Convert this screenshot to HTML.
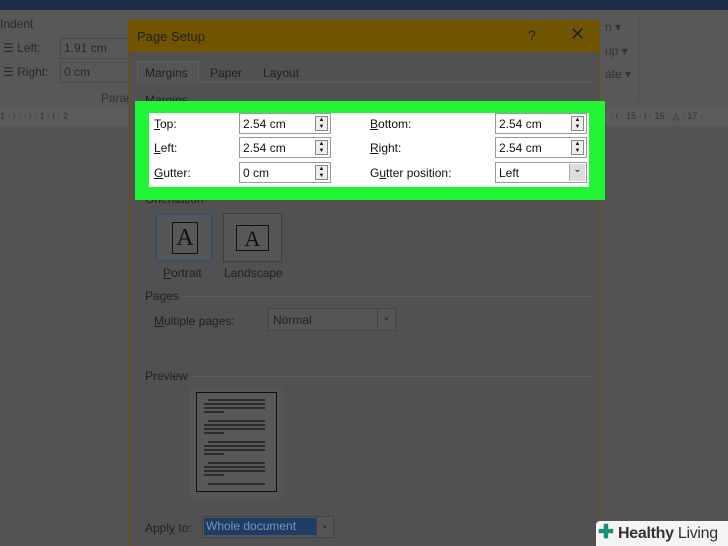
<!DOCTYPE html>
<html><head><style>
*{margin:0;padding:0;box-sizing:border-box}
body{width:728px;height:546px;overflow:hidden;background:#535353;font-family:"Liberation Sans",sans-serif;position:relative;color:#222}
.a{position:absolute}
.t{font-size:12px;white-space:nowrap}
.inp{position:absolute;background:#fff;border:1px solid #999;height:21px;font-size:12px;padding:3px 0 0 3px;color:#111;white-space:nowrap}
.spin{position:absolute;right:2px;top:2px;width:13px;height:15px;border:1px solid #888;background:#eee;font-size:6px;line-height:7px;text-align:center}
.lbl{position:absolute;font-size:12px;color:#111;white-space:nowrap}
.dl{position:absolute;height:1px;background:#5f5f5f}
</style></head><body>
<div class="a" style="left:0;top:0;width:728px;height:10px;background:#1c2b47"></div>
<div class="a" style="left:0;top:10px;width:728px;height:98px;background:#585858"></div>
<div class="a t" style="left:0;top:17px;color:#2a2a2a">Indent</div>
<div class="a t" style="left:3px;top:41px;color:#2a2a2a">☰ Left:</div>
<div class="a" style="left:60px;top:38px;width:70px;height:21px;border:1px solid #4a4a4a"></div>
<div class="a t" style="left:64px;top:41px;color:#2a2a2a">1.91 cm</div>
<div class="a t" style="left:3px;top:65px;color:#2a2a2a">☰ Right:</div>
<div class="a" style="left:60px;top:62px;width:70px;height:21px;border:1px solid #4a4a4a"></div>
<div class="a t" style="left:64px;top:65px;color:#2a2a2a">0 cm</div>
<div class="a t" style="left:101px;top:91px;color:#333">Parag</div>
<div class="a" style="left:0;top:108px;width:728px;height:18px;background:#5b5b5b"></div>
<div class="a" style="left:0;top:111px;font-size:9px;color:#333;white-space:nowrap">1 · ı ·  · ı · 1 · ı · 2</div>
<div class="a" style="left:610px;top:111px;font-size:9px;color:#333;white-space:nowrap">· ı · 15 · ı · 16 · △ · 17 ·</div>
<div class="a" style="left:638px;top:14px;width:1px;height:88px;background:#4d4d4d"></div>
<div class="a t" style="left:605px;top:20px;color:#333">n ▾</div>
<div class="a t" style="left:605px;top:44px;color:#333">up ▾</div>
<div class="a t" style="left:605px;top:67px;color:#333">ate ▾</div>
<!-- dialog -->
<div class="a" style="left:128px;top:20px;width:472px;height:526px;background:#515151;border-left:1px solid #6b5000;border-right:1px solid #6b5000"></div>
<div class="a" style="left:128px;top:20px;width:472px;height:32px;background:#715400"></div>
<div class="a t" style="left:137px;top:29px;font-size:13px;color:#222">Page Setup</div>
<div class="a" style="left:528px;top:27px;font-size:14px;color:#222">?</div>
<div class="a" style="left:570px;top:24px;font-size:18px;color:#222">✕</div>
<div class="a" style="left:136px;top:82px;width:456px;height:1px;background:#5f5f5f"></div>
<div class="a" style="left:137px;top:61px;width:62px;height:22px;background:#555;border:1px solid #5f5f5f;border-bottom:none"></div>
<div class="a t" style="left:145px;top:66px">Margins</div>
<div class="a t" style="left:210px;top:66px">Paper</div>
<div class="a t" style="left:263px;top:66px">Layout</div>
<div class="a t" style="left:145px;top:93px">Margins</div>
<div class="a t" style="left:145px;top:192px">Orientation</div>
<!-- green highlight -->
<div class="a" style="left:135px;top:101px;width:470px;height:99px;background:#20f536"></div>
<div class="a" style="left:149px;top:113px;width:440px;height:74px;background:#fff"></div>
<div class="lbl" style="left:154px;top:117px"><u>T</u>op:</div>
<div class="lbl" style="left:154px;top:141px"><u>L</u>eft:</div>
<div class="lbl" style="left:154px;top:166px"><u>G</u>utter:</div>
<div class="inp" style="left:239px;top:113px;width:92px">2.54 cm<div class="spin">▲<br>▼</div></div>
<div class="inp" style="left:239px;top:137px;width:92px">2.54 cm<div class="spin">▲<br>▼</div></div>
<div class="inp" style="left:239px;top:162px;width:92px">0 cm<div class="spin">▲<br>▼</div></div>
<div class="lbl" style="left:370px;top:117px"><u>B</u>ottom:</div>
<div class="lbl" style="left:370px;top:141px"><u>R</u>ight:</div>
<div class="lbl" style="left:370px;top:166px">G<u>u</u>tter position:</div>
<div class="inp" style="left:495px;top:113px;width:92px">2.54 cm<div class="spin">▲<br>▼</div></div>
<div class="inp" style="left:495px;top:137px;width:92px">2.54 cm<div class="spin">▲<br>▼</div></div>
<div class="inp" style="left:495px;top:162px;width:92px">Left<div class="a" style="right:1px;top:1px;width:16px;height:17px;background:#ddd;border-left:1px solid #aaa;font-size:10px;text-align:center">⌄</div></div>
<!-- orientation -->
<div class="a" style="left:155px;top:213px;width:58px;height:49px;border:2px solid #3a4f6a;background:#565656"></div>
<div class="a" style="left:223px;top:213px;width:59px;height:49px;border:1px solid #3e3e3e;background:#565656"></div>
<div class="a" style="left:172px;top:222px;width:26px;height:32px;border:1px solid #111;background:#585858;font-family:'Liberation Serif',serif;font-size:24px;text-align:center;line-height:30px;color:#111">A</div>
<div class="a" style="left:236px;top:225px;width:33px;height:26px;border:1px solid #111;background:#585858;font-family:'Liberation Serif',serif;font-size:22px;text-align:center;line-height:26px;color:#111">A</div>
<div class="a t" style="left:163px;top:266px"><u>P</u>ortrait</div>
<div class="a t" style="left:224px;top:266px">Landscape</div>
<div class="a t" style="left:145px;top:289px">Pages</div>
<div class="dl" style="left:182px;top:296px;width:409px"></div>
<div class="a t" style="left:154px;top:314px"><u>M</u>ultiple pages:</div>
<div class="a" style="left:268px;top:308px;width:128px;height:23px;border:1px solid #444;background:#555"></div>
<div class="a t" style="left:273px;top:313px">Normal</div>
<div class="a" style="left:377px;top:309px;width:18px;height:21px;border-left:1px solid #444;font-size:10px;text-align:center;line-height:18px">⌄</div>
<div class="a t" style="left:145px;top:369px">Preview</div>
<div class="dl" style="left:192px;top:376px;width:399px"></div>
<div class="a" style="left:190px;top:387px;width:93px;height:112px;background:#555"></div>
<div class="a" style="left:196px;top:392px;width:81px;height:100px;border:1px solid #111;background:#585858"></div>
<svg class="a" style="left:196px;top:392px" width="81" height="100"><g stroke="#111" stroke-width="1.3">
<line x1="12" y1="8" x2="69" y2="8"/><line x1="8" y1="12" x2="69" y2="12"/><line x1="8" y1="16" x2="69" y2="16"/><line x1="8" y1="20" x2="28" y2="20"/>
<line x1="12" y1="29" x2="69" y2="29"/><line x1="8" y1="33" x2="69" y2="33"/><line x1="8" y1="37" x2="69" y2="37"/><line x1="8" y1="41" x2="28" y2="41"/>
<line x1="12" y1="50" x2="69" y2="50"/><line x1="8" y1="54" x2="69" y2="54"/><line x1="8" y1="58" x2="69" y2="58"/><line x1="8" y1="62" x2="28" y2="62"/>
<line x1="12" y1="71" x2="69" y2="71"/><line x1="8" y1="75" x2="69" y2="75"/><line x1="8" y1="79" x2="69" y2="79"/><line x1="8" y1="83" x2="28" y2="83"/>
<line x1="12" y1="92" x2="69" y2="92"/></g></svg>
<div class="a t" style="left:145px;top:521px">Appl<u>y</u> to:</div>
<div class="a" style="left:202px;top:516px;width:132px;height:22px;border:1px solid #444;background:#555"></div>
<div class="a" style="left:204px;top:518px;width:112px;height:17px;background:#1e3d66;color:#7f93b0;font-size:12px;padding:1px 2px;white-space:nowrap">Whole document</div>
<div class="a" style="left:316px;top:517px;width:17px;height:20px;border-left:1px solid #444;font-size:10px;text-align:center;line-height:18px">⌄</div>
<!-- logo -->
<div class="a" style="left:596px;top:521px;width:132px;height:25px;background:#f4f4f4;border-radius:4px 0 0 0"></div>
<div class="a" style="left:598px;top:522px;font-size:19px;font-weight:bold;color:#1a8f7a;line-height:22px">✚</div>
<div class="a" style="left:618px;top:524px;font-size:16px;color:#333;white-space:nowrap;line-height:20px;letter-spacing:-0.3px"><b>Healthy</b> Living</div>
</body></html>
